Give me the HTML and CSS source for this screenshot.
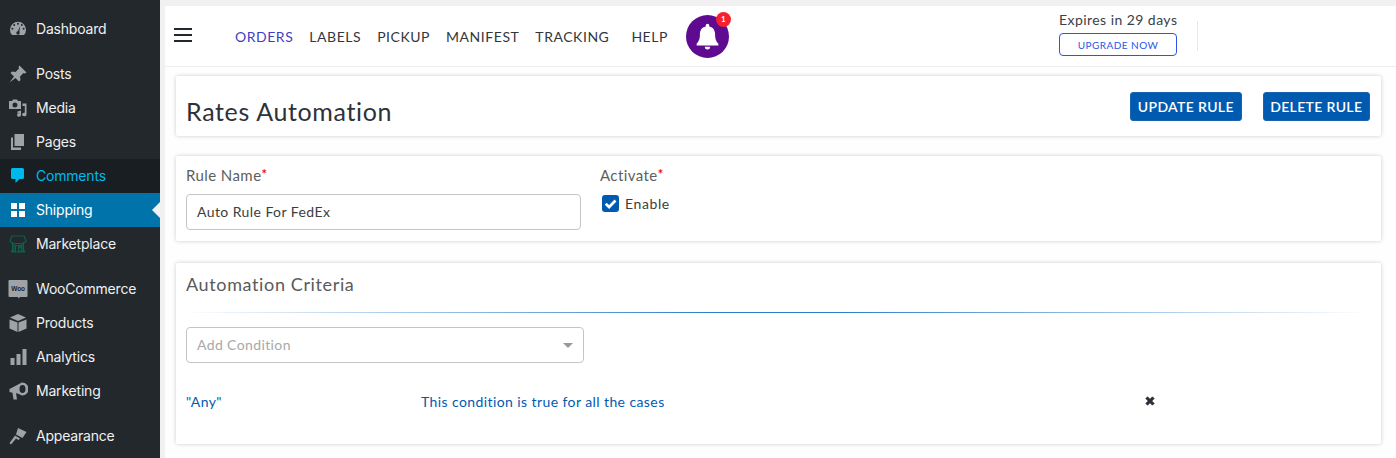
FILE: index.html
```html
<!DOCTYPE html>
<html lang="en">
<head>
<meta charset="utf-8">
<title>Rates Automation</title>
<link rel="stylesheet" href="styles.css">
</head>
<body>
<div class="shell">
  <aside class="sidebar">
    <ul class="menu">
      <li class="item"><svg class="ico" viewBox="0 0 20 20"><path d="M4 16A8 8 0 1 1 16 16Z" fill="#9ea3a8"/><g fill="#23282d"><circle cx="10" cy="4.700" r="1"/><circle cx="6.200" cy="6" r="1"/><circle cx="13.800" cy="6" r="1"/><circle cx="4.400" cy="9.800" r="1"/><circle cx="15.600" cy="9.800" r="1"/><path d="M9 14L12 7.500 12.200 7.600 11 14.500Z"/><circle cx="10" cy="14" r="1.700"/></g></svg><span>Dashboard</span></li>
      <li class="item sep"><svg class="ico" viewBox="0 0 20 20"><path d="M11.500 1.500L18.500 8.500 17 9.500 15.500 9 12 12.500 12.500 16 11 17.500 7.500 14 1.500 18.500 6 12.500 2.500 9 4 7.500 7.500 8 11 4.500 10.500 3Z" fill="#9ea3a8"/></svg><span>Posts</span></li>
      <li class="item"><svg class="ico" viewBox="0 0 20 20"><path fill-rule="evenodd" d="M1 3H4L5 1.500H9L10 3H13V11H1ZM7 4.500A2.500 2.500 0 1 0 7 9.500 2.500 2.500 0 0 0 7 4.500Z" fill="#9ea3a8"/><path d="M14.500 5.500H18.500V16.500A2.200 1.800 0 1 1 16.800 14.800V8H14.500ZM9.500 13.500L13 12.500V17A2 1.700 0 1 1 11.400 15.300V14.800L9.500 15.300Z" fill="#9ea3a8"/></svg><span>Media</span></li>
      <li class="item"><svg class="ico" viewBox="0 0 20 20"><path d="M6.500 2H16V14H6.500ZM3 5.500H5V15.500H13V18H3Z" fill="#9ea3a8"/></svg><span>Pages</span></li>
      <li class="item comments"><svg class="ico" viewBox="0 0 20 20"><path d="M4.500 2H14.500Q16 2 16 3.500V11.500Q16 13 14.500 13H11.500L7.500 17V13H4.500Q3 13 3 11.500V3.500Q3 2 4.500 2Z" fill="#00b9eb"/></svg><span>Comments</span></li>
      <li class="item active"><svg class="ico" viewBox="0 0 20 20"><path d="M3 3H9V9H3ZM11 3H17V9H11ZM3 11H9V17H3ZM11 11H17V17H11Z" fill="#fff"/></svg><span>Shipping</span></li>
      <li class="item"><svg class="ico" viewBox="0 0 20 20"><path d="M4 2H16L18 7Q17 9 15.500 8.500V17H16.500V18H3.500V17H4.500V8.500Q3 9 2 7ZM6 9.500V17H7.500V11.500H10.500V17H14V9.500ZM11.500 11.500H13V14H11.500Z" fill="none" stroke="#0f5f49" stroke-width="1.200"/></svg><span>Marketplace</span></li>
      <li class="item sep"><svg class="woo" viewBox="0 0 20 20"><path d="M1.500 1H18.500Q19.500 1 19.500 2V17Q19.500 18 18.500 18H12L10.500 19.500 10 18H1.500Q.5 18 .5 17V2Q.5 1 1.500 1Z" fill="#9ea3a8"/><text class="woo-text" x="10" y="11.800">Woo</text></svg><span>WooCommerce</span></li>
      <li class="item"><svg class="ico" viewBox="0 0 20 20"><path d="M10 1L18 4.500 10 8 2 4.500ZM1.500 6.500L9.500 9.500V19L1.500 15.500ZM18.500 6.500V15.500L10.500 19V9.500Z" fill="#9ea3a8"/></svg><span>Products</span></li>
      <li class="item"><svg class="ico" viewBox="0 0 20 20"><path d="M2.500 11H6.500V18H2.500ZM8.500 7H12.500V18H8.500ZM14.500 2H18.500V18H14.500Z" fill="#9ea3a8"/></svg><span>Analytics</span></li>
      <li class="item"><svg class="ico" viewBox="0 0 20 20"><path fill-rule="evenodd" d="M1.500 8L12 2.500Q13 1.500 14.500 1.500A6 6.500 0 0 1 14.500 14.500Q13 14.500 12 13.500L8 12 9 18.500H5.500L4.500 11.800 1.500 11ZM14.500 4A3 4 0 0 0 14.500 12 3 4 0 0 0 14.500 4Z" fill="#9ea3a8"/></svg><span>Marketing</span></li>
      <li class="item sep"><svg class="ico" viewBox="0 0 20 20"><path d="M10 2L18.500 6 14.500 12 8 8.500ZM7 9.500L12 12.500 10.500 14 8 12.500 3 18.500 1.500 17 6 11Z" fill="#9ea3a8"/></svg><span>Appearance</span></li>
    </ul>
  </aside>
  <main class="main">
    <header class="topbar">
      <button class="burger" type="button" aria-label="Menu"><i></i><i></i><i></i></button>
      <nav class="nav">
        <a class="nav-link current">ORDERS</a>
        <a class="nav-link">LABELS</a>
        <a class="nav-link">PICKUP</a>
        <a class="nav-link">MANIFEST</a>
        <a class="nav-link">TRACKING</a>
        <a class="nav-link help">HELP</a>
      </nav>
      <div class="bell">
        <svg viewBox="0 0 24 24" class="bell-ico"><path d="M12 1.500A1.500 1.500 0 0 1 13.500 3V3.800C16.800 4.500 18.300 7 18.300 10.500 18.300 14.500 19.500 16.200 21 18V19.500H3V18C4.500 16.200 5.700 14.500 5.700 10.500 5.700 7 7.200 4.500 10.500 3.800V3A1.500 1.500 0 0 1 12 1.500ZM9.800 20.500H14.200A2.200 2.200 0 0 1 9.800 20.500Z" fill="#fff"/></svg>
        <span class="badge">1</span>
      </div>
      <div class="expiry">
        <p class="expiry-text">Expires in 29 days</p>
        <button class="upgrade" type="button">UPGRADE NOW</button>
      </div>
      <div class="divider"></div>
    </header>
    <div class="content">
      <section class="card title-card">
        <h1 class="title">Rates Automation</h1>
        <div class="actions">
          <button class="btn" type="button">UPDATE RULE</button>
          <button class="btn" type="button">DELETE RULE</button>
        </div>
      </section>
      <section class="card form-card">
        <div class="field name-field">
          <label class="label">Rule Name<em>*</em></label>
          <input class="input" type="text" value="Auto Rule For FedEx">
        </div>
        <div class="field">
          <label class="label">Activate<em>*</em></label>
          <div class="check-row">
            <span class="check"><svg viewBox="0 0 16 16"><path d="M3.500 8.200L6.700 11.300 12.700 5.200" fill="none" stroke="#fff" stroke-width="2.600"/></svg></span>
            <span class="check-label">Enable</span>
          </div>
        </div>
      </section>
      <section class="card criteria-card">
        <h2 class="subtitle">Automation Criteria</h2>
        <div class="rule-line"></div>
        <div class="select"><span>Add Condition</span><i class="caret"></i></div>
        <div class="cond-row">
          <span class="cond-name">"Any"</span>
          <span class="cond-desc">This condition is true for all the cases</span>
          <svg class="close" viewBox="0 0 10 10"><path d="M1.500 3L3 1.500 5 3.500 7 1.500 8.500 3 6.500 5 8.500 7 7 8.500 5 6.500 3 8.500 1.500 7 3.500 5Z" fill="#2b2f36" stroke="#2b2f36" stroke-width=".6"/></svg>
        </div>
      </section>
    </div>
  </main>
</div>
</body>
</html>
```

FILE: styles.css
```css
* { box-sizing: border-box; }
html, body { margin: 0; height: 458px; overflow: hidden; }
body { font-family: "Lato", sans-serif; background: #f1f1f1; }
.shell { display: flex; height: 458px; }

.sidebar { width: 160px; flex: none; background: #23282d; padding-top: 12px; font-family: "Inter", sans-serif; }
.menu { list-style: none; margin: 0; padding: 0; }
.item { position: relative; height: 34px; display: flex; align-items: center; color: #eef0f1; font-size: 14px; line-height: 34px; letter-spacing: -0.2px; }
.item span { margin-left: 8px; }
.ico { width: 20px; height: 20px; margin-left: 8px; flex: none; }
.woo { width: 20px; height: 20px; margin-left: 8px; flex: none; }
.woo-text { font: 700 6.500px "Liberation Sans", sans-serif; fill: #23282d; text-anchor: middle; }
.sep { margin-top: 11px; }
.comments { background: #191e23; color: #00b9eb; }
.active { background: #0073aa; color: #fff; }
.active::after { content: ""; position: absolute; right: 0; top: 50%; margin-top: -8px; border: 8px solid transparent; border-right-color: #f1f1f1; border-left-width: 0; }

.main { flex: 1; min-width: 0; padding: 6px 0 0 5px; display: flex; flex-direction: column; }
.topbar { height: 61px; flex: none; background: #fff; border-bottom: 1px solid #eeeeee; display: flex; align-items: center; }
.burger { margin: 0 0 0 9px; padding: 0; width: 18px; height: 14px; border: 0; background: none; display: flex; flex-direction: column; justify-content: space-between; position: relative; top: -1px; }
.burger i { display: block; height: 2px; background: #23282d; }
.nav { margin-left: 43px; display: flex; align-items: center; }
.nav-link { font-size: 14px; letter-spacing: 0.54px; color: #33373d; margin-right: 16px; white-space: nowrap; }
.current { color: #3f3fbf; }
.help { margin-left: 6px; margin-right: 0; }
.bell { position: relative; width: 43px; height: 43px; margin-left: 18px; border-radius: 50%; background: #5e0a91; display: flex; align-items: center; justify-content: center; }
.bell-ico { width: 29px; height: 29px; }
.badge { position: absolute; top: -3px; right: -2px; width: 15px; height: 15px; border-radius: 50%; background: #f5222d; color: #fff; font-size: 8px; font-weight: 700; line-height: 15px; text-align: center; }
.expiry { margin-left: auto; align-self: flex-start; margin-top: 5px; width: 118px; display: flex; flex-direction: column; align-items: stretch; }
.expiry-text { margin: 0 0 4px; font-size: 14px; letter-spacing: 0.44px; line-height: 18px; color: #3c4043; white-space: nowrap; text-align: center; }
.upgrade { height: 23px; padding: 0; background: #fff; border: 1px solid #2a55e5; border-radius: 4px; color: #2a55e5; font: 10px "Lato", sans-serif; letter-spacing: 0.47px; }
.divider { width: 1px; height: 30px; background: #e8e8e8; margin: 0 198px 0 20px; }

.content { flex: 1; background: #fefefe; padding: 9px 15px 0 11px; display: flex; flex-direction: column; }
.card { background: #fff; border-radius: 2px; box-shadow: 0 0 4px rgba(0,0,0,.2); }
.title-card { height: 60px; display: flex; align-items: center; justify-content: space-between; padding: 0 11px 0 10px; }
.title { margin: 10px 0 0; font-size: 25px; font-weight: 400; letter-spacing: 0.65px; color: #2e3238; line-height: 32px; }
.actions { display: flex; gap: 21px; }
.btn { height: 29px; padding: 0 6.700px; background: #005bb0; border: 1px solid #1a63ad; border-radius: 3px; color: #fff; font: 600 14px "Lato", sans-serif; letter-spacing: 0.34px; white-space: nowrap; }

.form-card { height: 85px; margin-top: 20px; padding: 9px 10px 0; display: flex; }
.name-field { width: 395px; margin-right: 19px; }
.label { display: block; font-size: 15px; letter-spacing: 0.42px; line-height: 20px; color: #5e5e5e; }
.label em { color: #f01010; font-style: normal; font-weight: 700; font-size: 13px; position: relative; top: -2px; }
.input { display: block; width: 395px; height: 36px; margin-top: 8px; padding: 0 10px 2px; border: 1px solid #c4c4c4; border-radius: 4px; background: #fff; font: 14px "Lato", sans-serif; letter-spacing: 0.42px; color: #3d3d3d; }
.check-row { display: flex; align-items: center; margin-top: 9px; }
.check { width: 17px; height: 17px; margin-left: 2px; background: #005bb0; border-radius: 3px; display: flex; }
.check svg { width: 17px; height: 17px; }
.check-label { margin-left: 6px; font-size: 14px; letter-spacing: 0.6px; color: #3d3d3d; }

.criteria-card { height: 181px; margin-top: 22px; padding: 9px 10px 0; }
.subtitle { margin: 0; font-size: 18px; font-weight: 400; letter-spacing: 0.63px; line-height: 24px; color: #5a5a5a; }
.rule-line { height: 1px; margin: 16px 0 0 -6px; background: linear-gradient(90deg, rgba(40,125,205,0), #2a7dc8 45%, #2a7dc8 55%, rgba(40,125,205,0)); }
.select { width: 398px; height: 36px; margin-top: 14px; padding: 0 10px 2px; border: 1px solid #c4c4c4; border-radius: 4px; display: flex; align-items: center; justify-content: space-between; font-size: 14px; letter-spacing: 0.38px; color: #a8a8a8; }
.caret { border: 5px solid transparent; border-top: 5px solid #999; border-bottom: 0; border-left-width: 5.500px; border-right-width: 5.500px; position: relative; top: 1px; }
.cond-row { display: flex; align-items: center; margin-top: 29px; height: 18px; font-size: 14px; letter-spacing: 0.41px; color: #005bb0; }
.cond-name { width: 235px; }
.cond-desc { width: 723px; }
.close { width: 12px; height: 12px; }
```
